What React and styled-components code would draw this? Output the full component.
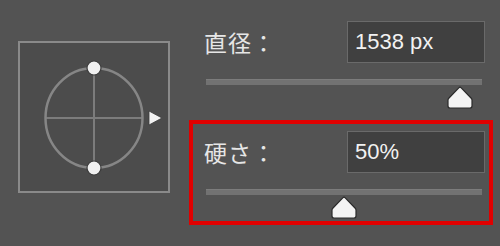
import React from "react";
import styled, { createGlobalStyle } from "styled-components";

const Global = createGlobalStyle`
  html, body { margin: 0; padding: 0; background: #535353; }
  body { width: 500px; height: 246px; overflow: hidden; }
`;

const Page = styled.div`
  display: flex;
  align-items: flex-start;
  width: 500px;
  height: 246px;
  background: #535353;
  box-sizing: border-box;
  padding: 10px 7px 0 18px;
  font-family: "Liberation Sans", "Noto Sans CJK JP", sans-serif;
  color: #e8e8e8;
`;

const Preview = styled.div`
  width: 148px;
  height: 148px;
  margin-top: 31px;
  border: 2px solid #8a8a8a;
  background: #4c4c4c;
  flex: none;
`;

const Controls = styled.div`
  display: flex;
  flex-direction: column;
  gap: 5px;
  margin-left: 19px;
  width: 305px;
`;

const Section = styled.div`
  box-sizing: border-box;
  height: 105px;
  border: 4px solid ${(p) => (p.$highlighted ? "#e00000" : "transparent")};
  padding: 7px 4px 0 11px;
  display: flex;
  flex-direction: column;
`;

const Row = styled.div`
  display: flex;
  align-items: center;
  justify-content: space-between;
`;

const Label = styled.span`
  font-family: "Noto Sans CJK JP", sans-serif;
  font-size: 23px;
  line-height: 1;
  color: #e6e6e6;
  letter-spacing: 1px;
`;

const Field = styled.div`
  box-sizing: border-box;
  width: 138px;
  height: 42px;
  border: 1.5px solid #6a6a6a;
  background: #404040;
  display: flex;
  align-items: center;
  padding-left: 7px;
  font-family: "Liberation Sans", "Noto Sans", sans-serif;
  font-size: 22px;
  color: #f2f2f2;
`;

const Slider = styled.div`
  position: relative;
  margin: 16px 3px 0 2px;
  height: 30px;
`;

const Track = styled.div`
  height: 6px;
  background: #727272;
  border-top: 1px solid #7c7c7c;
  box-sizing: border-box;
`;

const Thumb = styled.svg`
  position: absolute;
  top: 7px;
  width: 26px;
  height: 23px;
  transform: translateX(-50%);
`;

function SliderControl({ value }) {
  return (
    <Slider>
      <Track />
      <Thumb viewBox="0 0 26 23" style={{ left: `${value * 100}%` }}>
        <path
          d="M3 22 H23 Q25 22 25 20 V14 Q25 13 24 12 L14.2 1.8 Q13 0.6 11.8 1.8 L2 12 Q1 13 1 14 V20 Q1 22 3 22 Z"
          fill="#f4f4f4"
          stroke="#2a2a2a"
          strokeWidth="1.2"
        />
      </Thumb>
    </Slider>
  );
}

function BrushPreview() {
  return (
    <Preview>
      <svg width="148" height="148" viewBox="0 0 148 148">
        <line x1="25" y1="75" x2="123" y2="75" stroke="#7c7c7c" strokeWidth="2" />
        <line x1="74" y1="25" x2="74" y2="125" stroke="#7c7c7c" strokeWidth="2" />
        <ellipse cx="74" cy="75" rx="48.5" ry="50" fill="none" stroke="#868686" strokeWidth="2.5" />
        <circle cx="74" cy="25" r="7" fill="#f0f0f0" stroke="#3a3a3a" strokeWidth="1.2" />
        <circle cx="74" cy="125" r="7" fill="#f0f0f0" stroke="#3a3a3a" strokeWidth="1.2" />
        <path d="M129 68 L142 75 L129 82 Z" fill="#f2f2f2" stroke="#3a3a3a" strokeWidth="0.8" />
      </svg>
    </Preview>
  );
}

export default function App() {
  return (
    <>
      <Global />
      <Page>
        <BrushPreview />
        <Controls>
          <Section>
            <Row>
              <Label>直径：</Label>
              <Field>1538 px</Field>
            </Row>
            <SliderControl value={0.92} />
          </Section>
          <Section $highlighted>
            <Row>
              <Label>硬さ：</Label>
              <Field>50%</Field>
            </Row>
            <SliderControl value={0.5} />
          </Section>
        </Controls>
      </Page>
    </>
  );
}
